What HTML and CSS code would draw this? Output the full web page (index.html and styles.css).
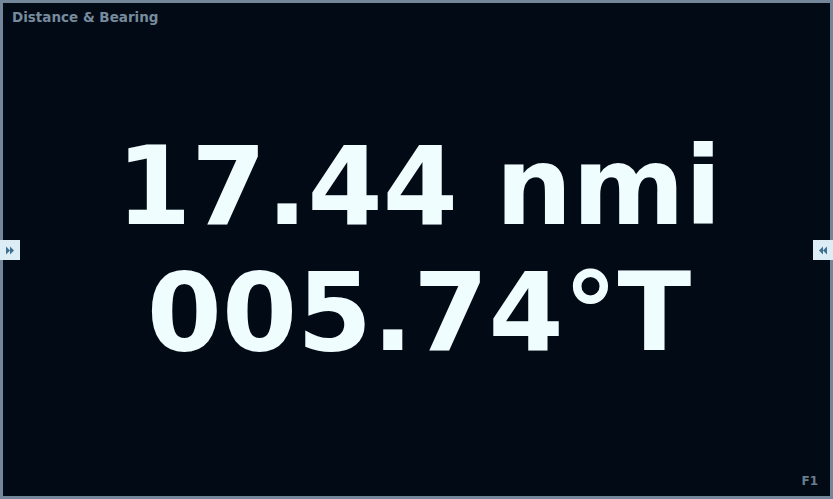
FILE: index.html
```html
<!DOCTYPE html>
<html>
<head>
<meta charset="utf-8">
<link rel="stylesheet" href="styles.css">
</head>
<body>
<div class="panel">
  <div class="title">Distance &amp; Bearing</div>
  <div class="readout">
    <div class="line">17.44 nmi</div>
    <div class="line">005.74°T</div>
  </div>
  <div class="footer"><span class="key">F1</span></div>
  <div class="side-btn left">
    <svg width="10" height="9" viewBox="0 0 10 9"><path d="M1 0.5 L5 4.5 L1 8.5 Z M5 0.5 L9 4.5 L5 8.5 Z" fill="#3d6f90"/></svg>
  </div>
  <div class="side-btn right">
    <svg width="10" height="9" viewBox="0 0 10 9"><path d="M9 0.5 L5 4.5 L9 8.5 Z M5 0.5 L1 4.5 L5 8.5 Z" fill="#3d6f90"/></svg>
  </div>
</div>
</body>
</html>
```
FILE: styles.css
```css
html, body {
  margin: 0;
  padding: 0;
  background: #020a16;
}
.panel {
  position: relative;
  box-sizing: border-box;
  width: 833px;
  height: 499px;
  background: #020a16;
  border: 3px solid #74879a;
  display: flex;
  flex-direction: column;
  font-family: "DejaVu Sans", sans-serif;
  font-weight: bold;
}
.title {
  padding: 6px 0 0 9px;
  font-size: 13.5px;
  line-height: 16px;
  color: #768b9c;
}
.readout {
  flex: 1;
  display: flex;
  flex-direction: column;
  align-items: center;
  justify-content: center;
  color: #effdff;
  font-size: 108px;
  line-height: 126px;
  padding-left: 5px;
  margin-top: 0;
}
.footer {
  display: flex;
  justify-content: flex-end;
  padding: 0 12px 8px 0;
}
.key {
  font-size: 12px;
  line-height: 14px;
  color: #6a7d8c;
}
.side-btn {
  position: absolute;
  top: 237px;
  width: 20px;
  height: 20px;
  background: #dcedf5;
  display: flex;
  align-items: center;
  justify-content: center;
}
.side-btn.left { left: -3px; }
.side-btn.right { right: -3px; }
```
